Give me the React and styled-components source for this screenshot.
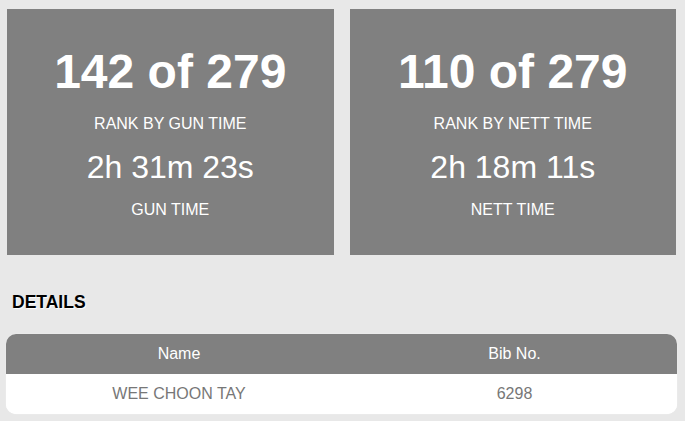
import styled, { createGlobalStyle } from "styled-components";

const Global = createGlobalStyle`
  html, body {
    margin: 0;
    padding: 0;
    background: #e8e8e8;
    font-family: "Liberation Sans", Arial, sans-serif;
  }
`;

const results = [
  { rank: "142 of 279", rankLabel: "RANK BY GUN TIME", time: "2h 31m 23s", timeLabel: "GUN TIME" },
  { rank: "110 of 279", rankLabel: "RANK BY NETT TIME", time: "2h 18m 11s", timeLabel: "NETT TIME" },
];

const Page = styled.div`
  width: 685px;
  height: 421px;
  box-sizing: border-box;
  padding: 9px 8px 0 6px;
  overflow: hidden;
`;

const Cards = styled.div`
  display: grid;
  grid-template-columns: 1fr 1fr;
  gap: 16px;
  padding: 0 1px;
`;

const Card = styled.div`
  background: #808080;
  color: #fff;
  height: 245.5px;
  box-sizing: border-box;
  padding-top: 38.5px;
  display: flex;
  flex-direction: column;
  align-items: center;
  text-align: center;
`;

const Rank = styled.div`
  font-size: 48px;
  line-height: 48px;
  font-weight: bold;
`;

const Label = styled.div`
  font-size: 16px;
  line-height: 20px;
  margin-top: ${(p) => p.$gap}px;
`;

const Time = styled.div`
  font-size: 32px;
  line-height: 36px;
  margin-top: 15.5px;
`;

const Heading = styled.h4`
  margin: 37px 0 0 6px;
  font-size: 17.5px;
  line-height: 21px;
  font-weight: bold;
  color: #000;
  text-shadow: 1px 1px 1px #fff;
`;

const Table = styled.div`
  margin-top: 21px;
  border-radius: 10px;
  overflow: hidden;
  background: #fff;
  box-shadow: 0 0 1px rgba(255, 255, 255, 0.9);
`;

const Row = styled.div`
  display: grid;
  grid-template-columns: 346px 1fr;
  height: 40px;
  align-items: center;
  text-align: center;
  font-size: 16px;
  background: ${(p) => (p.$head ? "#808080" : "#fff")};
  color: ${(p) => (p.$head ? "#fff" : "#777")};
`;

export default function App() {
  return (
    <Page>
      <Global />
      <Cards>
        {results.map((r) => (
          <Card key={r.rankLabel}>
            <Rank>{r.rank}</Rank>
            <Label $gap={18}>{r.rankLabel}</Label>
            <Time>{r.time}</Time>
            <Label $gap={15}>{r.timeLabel}</Label>
          </Card>
        ))}
      </Cards>
      <Heading>DETAILS</Heading>
      <Table>
        <Row $head>
          <span>Name</span>
          <span>Bib No.</span>
        </Row>
        <Row>
          <span>WEE CHOON TAY</span>
          <span>6298</span>
        </Row>
      </Table>
    </Page>
  );
}
